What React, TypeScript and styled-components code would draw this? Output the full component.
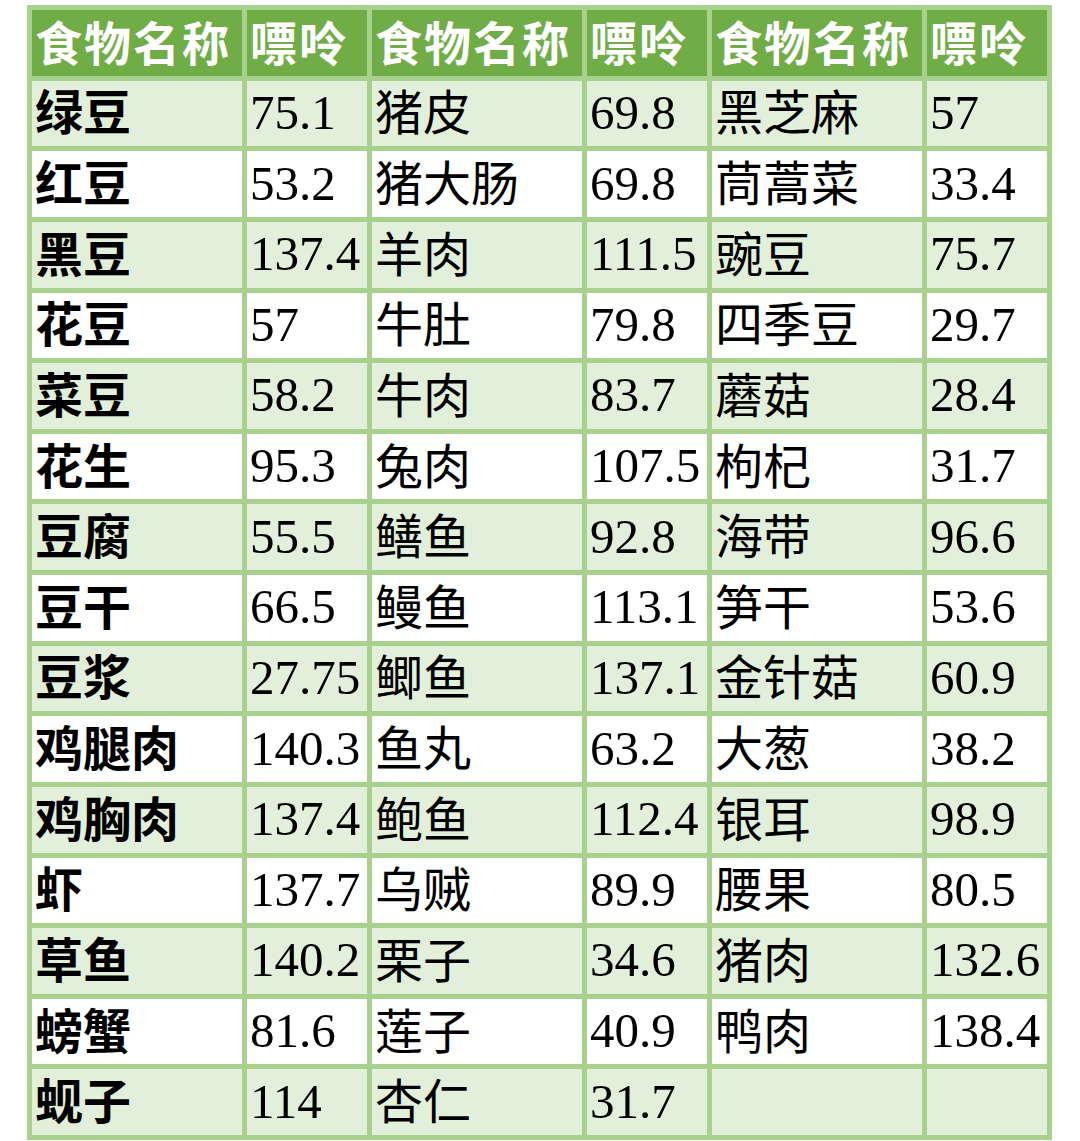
import React from 'react';
import styled, { createGlobalStyle } from 'styled-components';

const GlobalStyle = createGlobalStyle`
  html, body {
    margin: 0;
    padding: 0;
    background: #ffffff;
  }
`;

const Page = styled.div`
  width: 1080px;
  height: 1141px;
  padding: 5px 0 0 27px;
  box-sizing: border-box;
  background: #ffffff;
`;

const Table = styled.div`
  display: grid;
  grid-template-columns: 210px 120px 210px 120px 210px 120px;
  grid-template-rows: repeat(16, 1fr);
  gap: 5px;
  padding: 5px;
  width: 1025px;
  height: 1135px;
  box-sizing: border-box;
  background: #a9d18e;
`;

const HeadCell = styled.div`
  display: flex;
  align-items: center;
  padding: 0 0 4px 3px;
  background: #70ad47;
  color: #ffffff;
  font-family: 'Noto Sans CJK SC', sans-serif;
  font-weight: 700;
  font-size: 47px;
  line-height: 1;
  letter-spacing: 2px;
  white-space: nowrap;
`;

const Cell = styled.div<{ $shaded: boolean; $num: boolean }>`
  display: flex;
  align-items: center;
  padding: 0 0 ${({ $num }) => ($num ? '2px' : '8px')} 3px;
  background: ${({ $shaded }) => ($shaded ? '#e2efda' : '#ffffff')};
  color: #000000;
  white-space: nowrap;
  line-height: 1;
`;

const BoldName = styled.span`
  font-family: 'Noto Sans CJK SC', sans-serif;
  font-weight: 700;
  font-size: 48px;
`;

const Name = styled.span`
  font-family: 'Noto Sans CJK SC', sans-serif;
  font-weight: 400;
  font-size: 48px;
`;

const Num = styled.span`
  font-family: 'Liberation Serif', 'Times New Roman', serif;
  font-weight: 400;
  font-size: 49px;
`;

type Row = [string, string, string, string, string, string];

const ROWS: Row[] = [
  ['绿豆', '75.1', '猪皮', '69.8', '黑芝麻', '57'],
  ['红豆', '53.2', '猪大肠', '69.8', '茼蒿菜', '33.4'],
  ['黑豆', '137.4', '羊肉', '111.5', '豌豆', '75.7'],
  ['花豆', '57', '牛肚', '79.8', '四季豆', '29.7'],
  ['菜豆', '58.2', '牛肉', '83.7', '蘑菇', '28.4'],
  ['花生', '95.3', '兔肉', '107.5', '枸杞', '31.7'],
  ['豆腐', '55.5', '鳝鱼', '92.8', '海带', '96.6'],
  ['豆干', '66.5', '鳗鱼', '113.1', '笋干', '53.6'],
  ['豆浆', '27.75', '鲫鱼', '137.1', '金针菇', '60.9'],
  ['鸡腿肉', '140.3', '鱼丸', '63.2', '大葱', '38.2'],
  ['鸡胸肉', '137.4', '鲍鱼', '112.4', '银耳', '98.9'],
  ['虾', '137.7', '乌贼', '89.9', '腰果', '80.5'],
  ['草鱼', '140.2', '栗子', '34.6', '猪肉', '132.6'],
  ['螃蟹', '81.6', '莲子', '40.9', '鸭肉', '138.4'],
  ['蚬子', '114', '杏仁', '31.7', '', ''],
];

const renderText = (text: string, col: number) => {
  if (!text) return null;
  if (col === 0) return <BoldName>{text}</BoldName>;
  if (col % 2 === 1) return <Num>{text}</Num>;
  return <Name>{text}</Name>;
};

const App: React.FC = () => {
  return (
    <Page>
      <GlobalStyle />
      <Table>
        {[0, 1, 2].map((g) => (
          <React.Fragment key={`h${g}`}>
            <HeadCell>食物名称</HeadCell>
            <HeadCell>嘌呤</HeadCell>
          </React.Fragment>
        ))}
        {ROWS.map((row, r) =>
          row.map((text, c) => (
            <Cell key={`${r}-${c}`} $shaded={r % 2 === 0} $num={c % 2 === 1}>
              {renderText(text, c)}
            </Cell>
          ))
        )}
      </Table>
    </Page>
  );
};

export default App;
